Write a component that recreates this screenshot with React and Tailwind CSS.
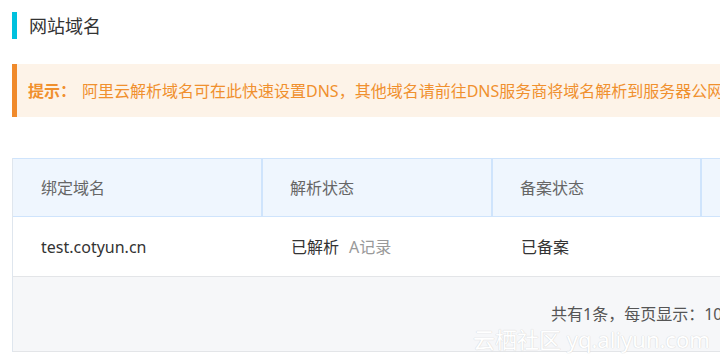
export default function App() {
  const font = { fontFamily: '"Noto Sans", "Noto Sans CJK SC", sans-serif' };
  return (
    <div className="w-[720px] h-[360px] overflow-hidden bg-white relative" style={font}>
      <div className="w-[1000px] pl-3 pt-3">
        <div className="flex items-center h-[27px]">
          <div className="w-[5px] h-[27px] bg-[#00c1de]" />
          <div className="ml-3 text-[18px] text-[#333] leading-none">网站域名</div>
        </div>
        <div className="mt-[25px] h-[53px] border-l-[5px] border-[#f08a2b] bg-[#fdf3e8] flex items-center pl-[11px] whitespace-nowrap text-[16px] text-[#f0902e]">
          <span className="font-bold">提示：</span>
          <span className="ml-[6px]">阿里云解析域名可在此快速设置DNS，其他域名请前往DNS服务商将域名解析到服务器公网IP</span>
        </div>
        <div className="mt-[41px] w-[950px] border-l border-[#dfe6ee]">
          <div className="flex h-[59px] bg-[#eff6fe] border border-l-0 border-[#cfe4fc] text-[16px] text-[#666]">
            <div className="w-[250px] border-r-2 border-[#cfe4fc] flex items-center pl-[28px]">绑定域名</div>
            <div className="w-[230px] border-r-2 border-[#cfe4fc] flex items-center pl-[27px]">解析状态</div>
            <div className="w-[209px] border-r-2 border-[#cfe4fc] flex items-center pl-[27px]">备案状态</div>
            <div className="flex-1" />
          </div>
          <div className="flex h-[60px] bg-white border-b border-[#e3e5e8] text-[16px] text-[#333]">
            <div className="w-[250px] flex items-center pl-[28px]">test.cotyun.cn</div>
            <div className="w-[230px] flex items-center pl-[28px]">
              已解析<span className="ml-[10px] text-[#999]">A记录</span>
            </div>
            <div className="w-[209px] flex items-center pl-[28px]">已备案</div>
          </div>
          <div className="h-[75px] w-[708px] bg-[#f6f7f9] border-b border-[#e3e5e8] flex items-center pl-[538px] whitespace-nowrap text-[16px] text-[#555]">
            共有1条，每页显示：10条
          </div>
        </div>
      </div>
      <div
        className="absolute left-[473px] top-[328px] text-[22px] text-white whitespace-nowrap leading-none"
        style={{ textShadow: '0 0 1px #d6d6d6, 0 0 1px #d6d6d6' }}
      >
        云栖社区 yq.aliyun.com
      </div>
    </div>
  );
}
